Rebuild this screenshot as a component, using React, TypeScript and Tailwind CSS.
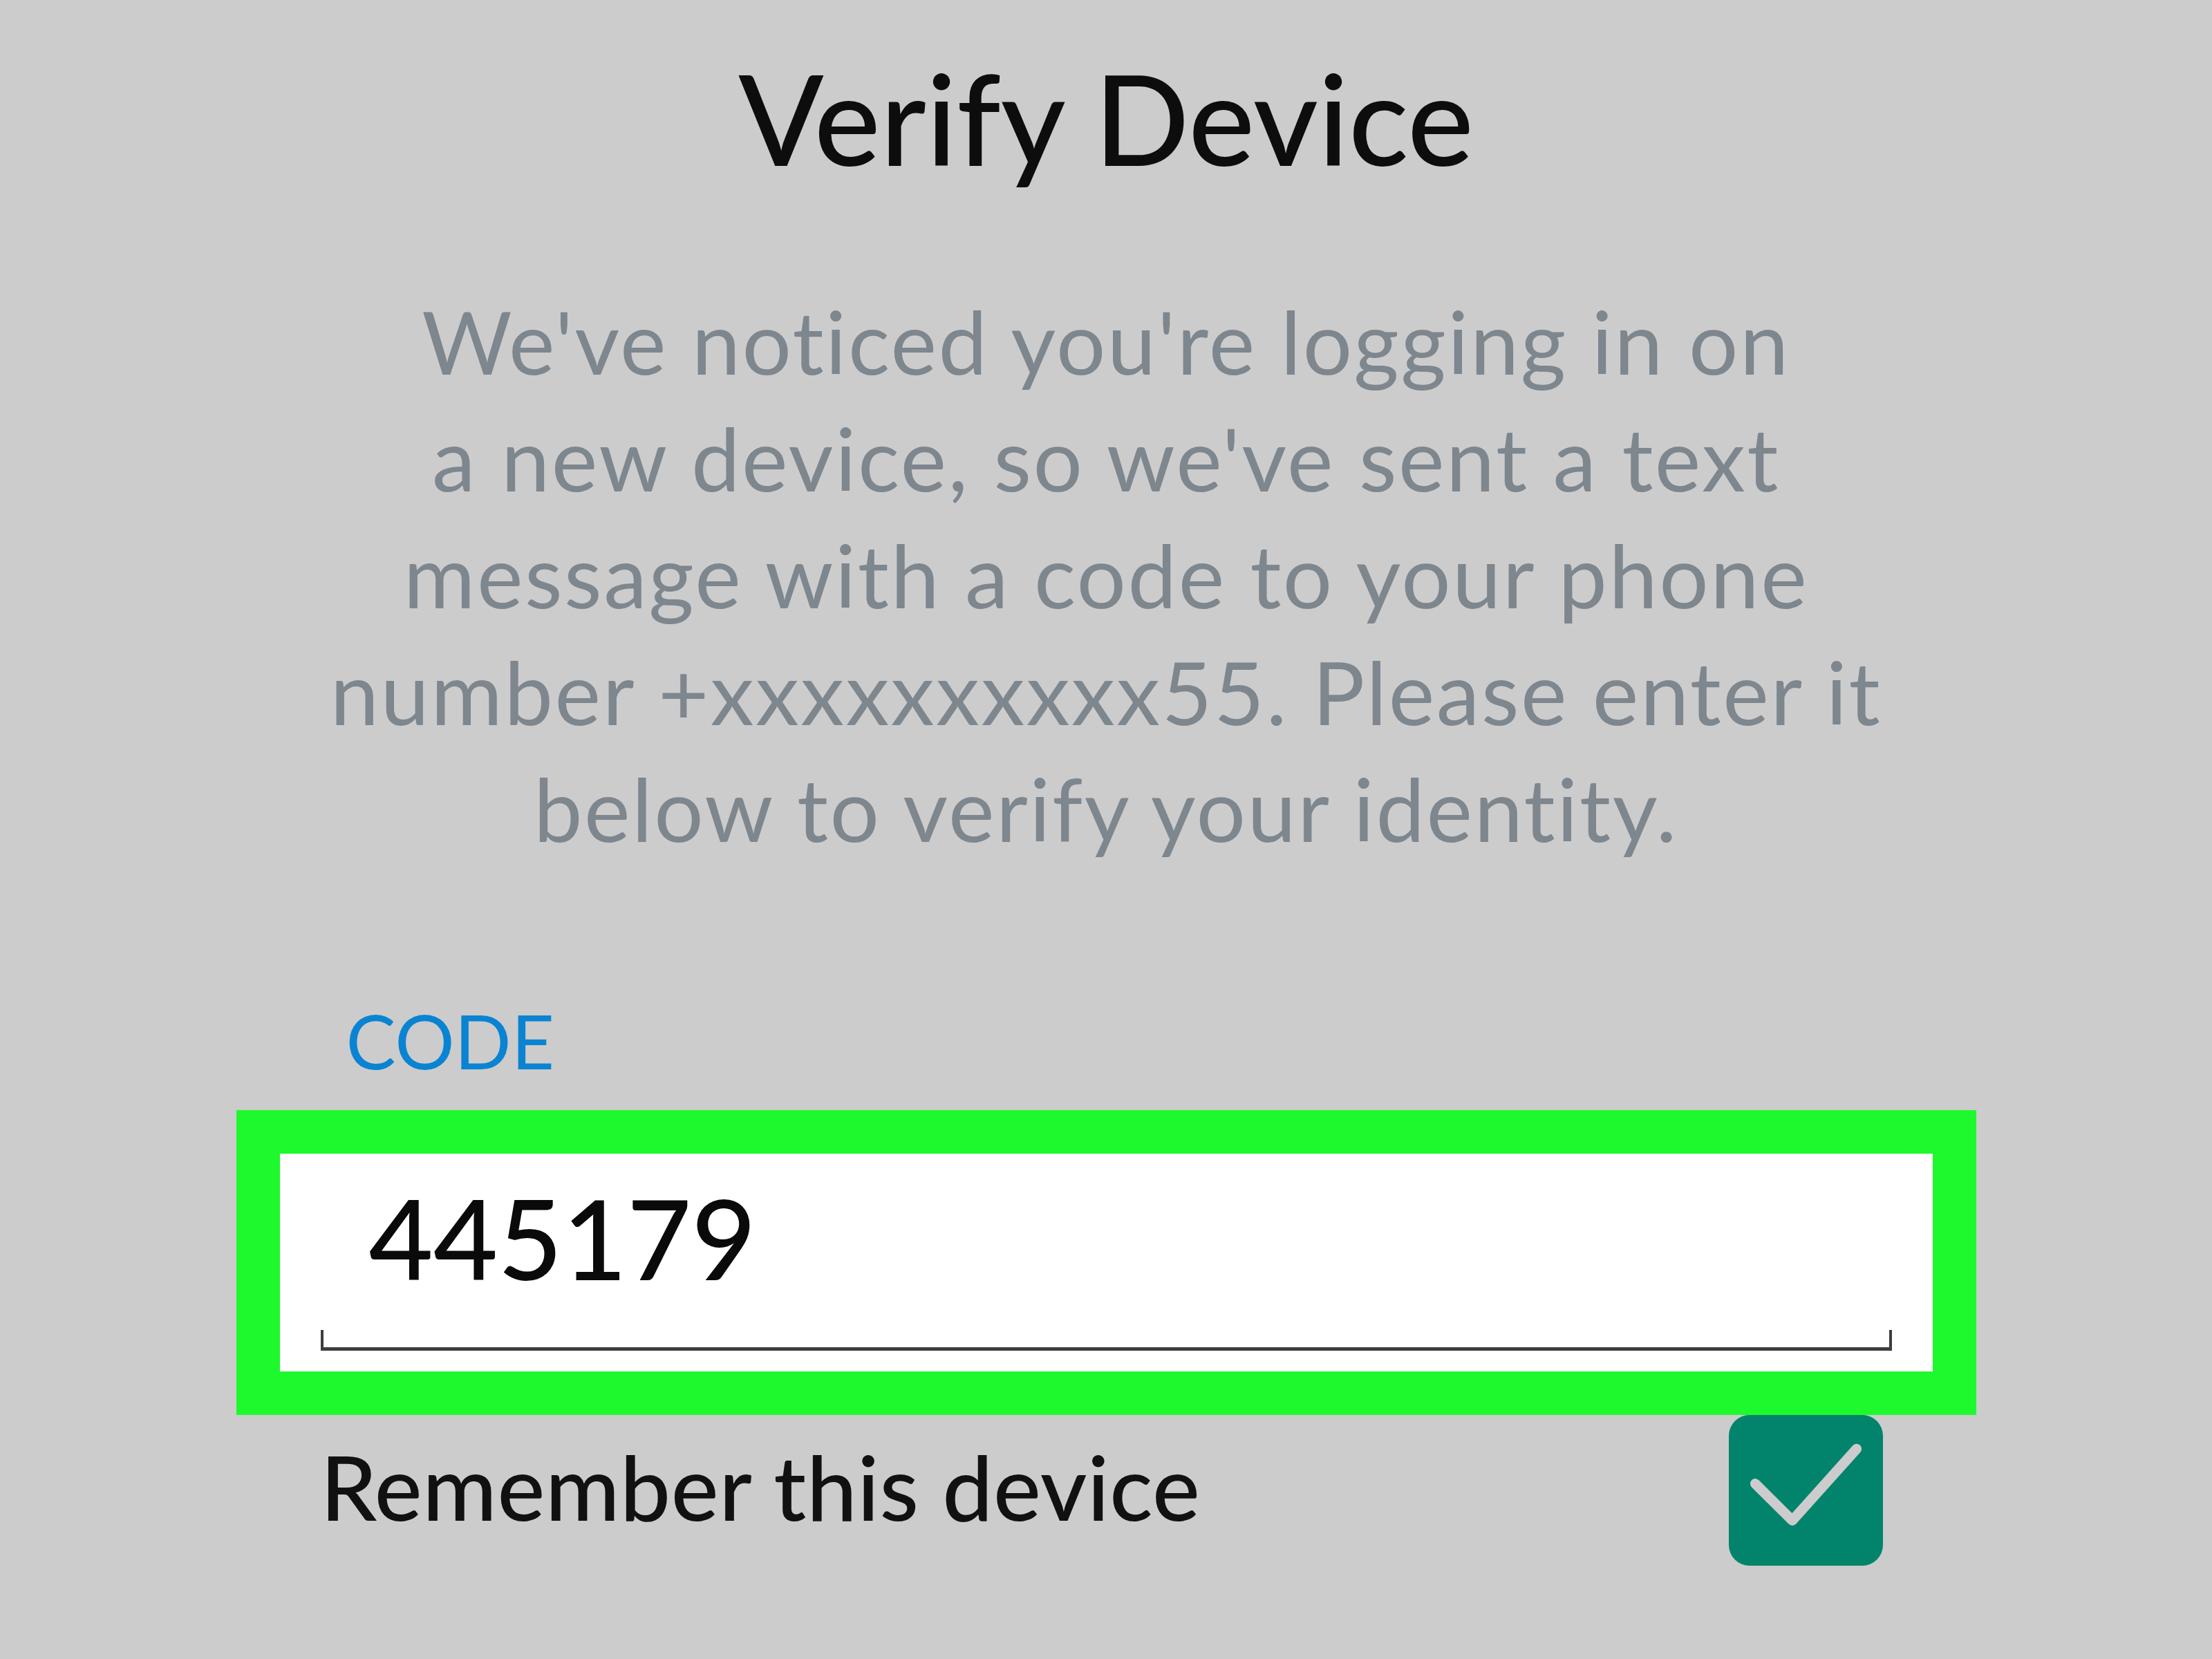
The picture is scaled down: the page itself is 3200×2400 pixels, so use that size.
export default function App() {
  return (
    <div
      className="w-[3200px] h-[2400px] bg-[#cccccc] flex flex-col items-center overflow-hidden"
      style={{ fontFamily: "Lato, 'Noto Sans', sans-serif" }}
    >
      {/* Title */}
      <h1 className="pt-[80px] text-[181px] leading-none font-medium text-[#0d0d0d] text-center">
        Verify Device
      </h1>

      {/* Description */}
      <p className="mt-[148px] text-[126px] leading-[169px] tracking-[0.02em] text-[#7e868e] text-center">
        We've noticed you're logging in on
        <br />
        a new device, so we've sent a text
        <br />
        message with a code to your phone
        <br />
        number +xxxxxxxxxx55. Please enter it
        <br />
        below to verify your identity.
      </p>

      {/* Form */}
      <div className="w-[2517px] mt-[197px] flex flex-col">
        <div className="ml-[159px] text-[108px] leading-none text-[#0a84d2]">CODE</div>

        <div className="mt-[47px] h-[441px] border-[63px] border-[#1ef92d] bg-white flex flex-col">
          <div className="pt-[40px] pl-[129px] text-[161px] leading-none font-medium text-[#0a0a0a]">
            445179
          </div>
          <div className="mt-auto mb-[30px] mx-[59px] h-[30px] border-x-[4px] border-b-[5px] border-[#3d3d3d]" />
        </div>

        <div className="flex items-start justify-between pl-[122px] pr-[135px]">
          <span className="mt-[38px] text-[130px] leading-none tracking-[0.005em] font-medium text-[#111111]">
            Remember this device
          </span>
          <div className="w-[223px] h-[218px] rounded-[30px] bg-[#01846b] flex items-center justify-center">
            <svg viewBox="0 0 100 100" className="w-full h-full">
              <path
                d="M16.4 45.6 L41 70 L83.6 22.5"
                fill="none"
                stroke="#cccccc"
                strokeWidth="6.7"
                strokeLinecap="round"
                strokeLinejoin="round"
              />
            </svg>
          </div>
        </div>
      </div>
    </div>
  )
}
